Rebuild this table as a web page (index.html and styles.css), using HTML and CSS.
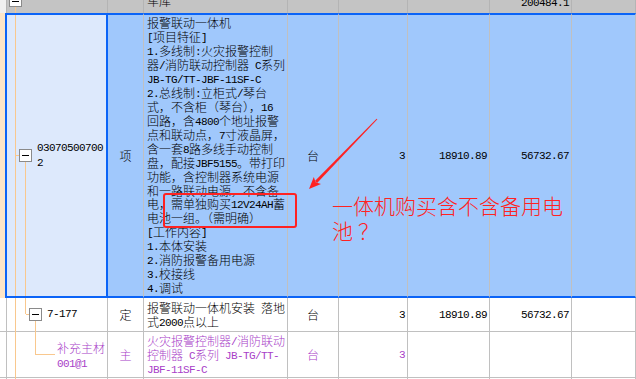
FILE: index.html
```html
<!DOCTYPE html>
<html lang="zh">
<head>
<meta charset="utf-8">
<title>清单</title>
<link rel="stylesheet" href="styles.css">
</head>
<body>
<div class="sheet">
  <div class="row hdr">
    <div class="c c0"></div>
    <div class="c c1"></div>
    <div class="c c2"></div>
    <div class="c c3 name"><div class="t">车库</div></div>
    <div class="c c4"></div>
    <div class="c c5"></div>
    <div class="c c6"></div>
    <div class="c c7 num hnum"><div class="t">200484.1</div></div>
    <div class="c c8"></div>
  </div>
  <div class="row sel">
    <div class="c c0"></div>
    <div class="c c1 code lv1"><div class="t en">03070500700<br>2</div></div>
    <div class="c c2 mid"><div class="t">项</div></div>
    <div class="c c3 name"><div class="t">报警联动一体机<br><span class="en">[</span>项目特征<span class="en">]</span><br><span class="en">1.</span>多线制<span class="en">:</span>火灾报警控制<br>器<span class="en">/</span>消防联动控制器<span class="en"> C</span>系列<br><span class="en">JB-TG/TT-JBF-11SF-C</span><br><span class="en">2.</span>总线制<span class="en">:</span>立柜式<span class="en">/</span>琴台<br>式，不含柜（琴台），<span class="en">16</span><br>回路，含<span class="en">4800</span>个地址报警<br>点和联动点，<span class="en">7</span>寸液晶屏，<br>含一套<span class="en">8</span>路多线手动控制<br>盘，配接<span class="en">JBF5155</span>。带打印<br>功能，含控制器系统电源<br>和一路联动电源，不含备<br>电，需单独购买<span class="en">12V24AH</span>蓄<br>电池一组。（需明确）<br><span class="en">[</span>工作内容<span class="en">]</span><br><span class="en">1.</span>本体安装<br><span class="en">2.</span>消防报警备用电源<br><span class="en">3.</span>校接线<br><span class="en">4.</span>调试</div></div>
    <div class="c c4 mid"><div class="t">台</div></div>
    <div class="c c5 num"><div class="t">3</div></div>
    <div class="c c6 num"><div class="t">18910.89</div></div>
    <div class="c c7 num"><div class="t">56732.67</div></div>
    <div class="c c8"></div>
  </div>
  <div class="row r2">
    <div class="c c0"></div>
    <div class="c c1 code lv2"><div class="t en">7-177</div></div>
    <div class="c c2 mid"><div class="t">定</div></div>
    <div class="c c3 name"><div class="t">报警联动一体机安装<span class="en"> </span>落地<br>式<span class="en">2000</span>点以上</div></div>
    <div class="c c4 mid"><div class="t">台</div></div>
    <div class="c c5 num"><div class="t">3</div></div>
    <div class="c c6 num"><div class="t">18910.89</div></div>
    <div class="c c7 num"><div class="t">56732.67</div></div>
    <div class="c c8"></div>
  </div>
  <div class="row r3 purple">
    <div class="c c0"></div>
    <div class="c c1 code lv3"><div class="t">补充主材<br><span class="en">001@1</span></div></div>
    <div class="c c2 mid"><div class="t">主</div></div>
    <div class="c c3 name"><div class="t">火灾报警控制器<span class="en">/</span>消防联动<br>控制器<span class="en"> C</span>系列<span class="en"> JB-TG/TT-</span><br><span class="en">JBF-11SF-C</span></div></div>
    <div class="c c4 mid"><div class="t">台</div></div>
    <div class="c c5 num"><div class="t">3</div></div>
    <div class="c c6 num"></div>
    <div class="c c7 num"></div>
    <div class="c c8"></div>
  </div>
  <div class="row r4">
    <div class="c c0"></div>
    <div class="c c1"></div>
    <div class="c c2"></div>
    <div class="c c3"></div>
    <div class="c c4"></div>
    <div class="c c5"></div>
    <div class="c c6"></div>
    <div class="c c7"></div>
    <div class="c c8"></div>
  </div>

  <svg class="tree" width="110" height="379" viewBox="0 0 110 379" shape-rendering="crispEdges">
    <g fill="#f9c88e">
      <rect x="15" y="7" width="1" height="6"/>
      <rect x="15" y="15" width="1" height="281"/>
      <rect x="15" y="298" width="1" height="81"/>
      <rect x="16" y="155" width="3" height="1"/>
      <rect x="25" y="162" width="1" height="134"/>
      <rect x="25" y="298" width="1" height="16"/>
      <rect x="26" y="314" width="3" height="1"/>
      <rect x="35" y="321" width="1" height="33"/>
      <rect x="35" y="354" width="20" height="1"/>
    </g>
    <g fill="#fff" stroke="#8a8a8a" stroke-width="1">
      <rect x="9.5" y="-5.5" width="12" height="12"/>
      <rect x="19.5" y="149.5" width="12" height="12"/>
      <rect x="29.5" y="308.5" width="12" height="12"/>
    </g>
    <g fill="#000">
      <rect x="12" y="1" width="7" height="1"/>
      <rect x="22" y="155" width="7" height="1"/>
      <rect x="32" y="314" width="7" height="1"/>
    </g>
  </svg>

  <div class="hl-box"></div>
  <svg class="arrow" width="636" height="379" viewBox="0 0 636 379">
    <polygon fill="#f22" points="377.4,119.3 376.6,118.7 314.9,181 317.1,183"/>
    <polygon fill="#f22" points="309,189 313.8,176.9 315.6,182.3 321,183.9"/>
  </svg>
  <div class="note">一体机购买含不含备用电<br>池<span class="qm">？</span></div>
</div>
</body>
</html>
```

FILE: styles.css
```css
html, body {
  margin: 0;
  padding: 0;
}
body {
  width: 636px;
  height: 379px;
  overflow: hidden;
  background: #fff;
  font-family: "Noto Sans CJK SC", "Noto Sans", sans-serif;
  font-size: 12px;
  font-weight: 300;
  color: #000;
}
.sheet {
  position: relative;
  width: 636px;
  height: 379px;
  overflow: hidden;
}
.row {
  display: grid;
  grid-template-columns: 7px 101px 36px 144px 51px 69px 82px 82px 1fr;
}
.c {
  box-sizing: border-box;
  border-right: 1px solid #c0c0c0;
  display: flex;
  align-items: center;
  overflow: hidden;
  min-width: 0;
}
.t {
  white-space: nowrap;
}
.en {
  font-family: "Liberation Mono", monospace;
  font-size: 11px;
  letter-spacing: -0.6px;
  line-height: 11px;
  vertical-align: 1px;
}
.t.en {
  line-height: 15px;
  vertical-align: baseline;
}

/* header (scrolled, partially visible) */
.hdr {
  height: 13px;
  background: #c4c4c4;
}
.hdr .c {
  border-right-color: #b4b4b4;
  align-items: flex-end;
  padding-bottom: 5px;
}
.hdr .c0 {
  background: #f0f0f0;
}
.hdr .hnum {
  padding-bottom: 4px;
}

/* selected row */
.sel {
  height: 285px;
}
.sel .c {
  background: #a0c8fc;
  border-top: 2px solid #0b64f7;
  border-bottom: 2px solid #0b64f7;
}
.sel .c0 {
  background: #fde6c8;
  border-top: 0;
  border-bottom: 0;
  border-right: 2px solid #0b64f7;
}
.sel .c1 {
  background: #dde9fc;
  border-right: 2px solid #0b64f7;
}

.r2 { height: 34px; }
.r3 { height: 46px; }
.r4 { height: 20px; }
.r2 .c, .r3 .c {
  border-bottom: 1px solid #c0c0c0;
}

.name {
  padding-left: 3px;
  line-height: 13.9px;
}
.r2 .name, .r3 .name {
  line-height: 14px;
}
.mid {
  justify-content: center;
}
.num {
  justify-content: flex-end;
  padding-right: 2px;
  font-family: "Liberation Mono", monospace;
  font-size: 11px;
  letter-spacing: -0.6px;
}
.code {
  line-height: 15px;
}
.code.lv1 { padding-left: 30px; }
.code.lv2 { padding-left: 40px; }
.code.lv3 { padding-left: 50px; }

.purple {
  color: #a840c8;
}

/* overlays */
.tree {
  position: absolute;
  left: 0;
  top: 0;
  pointer-events: none;
}
.arrow {
  position: absolute;
  left: 0;
  top: 0;
  pointer-events: none;
}
.hl-box {
  position: absolute;
  left: 163px;
  top: 193px;
  width: 134px;
  height: 35px;
  box-sizing: border-box;
  border: 2px solid #f22;
  border-radius: 3px;
}
.note {
  position: absolute;
  left: 332px;
  top: 193px;
  color: #f22;
  font-size: 21px;
  line-height: 25px;
  white-space: nowrap;
}
.qm {
  margin-left: 5px;
}
```
